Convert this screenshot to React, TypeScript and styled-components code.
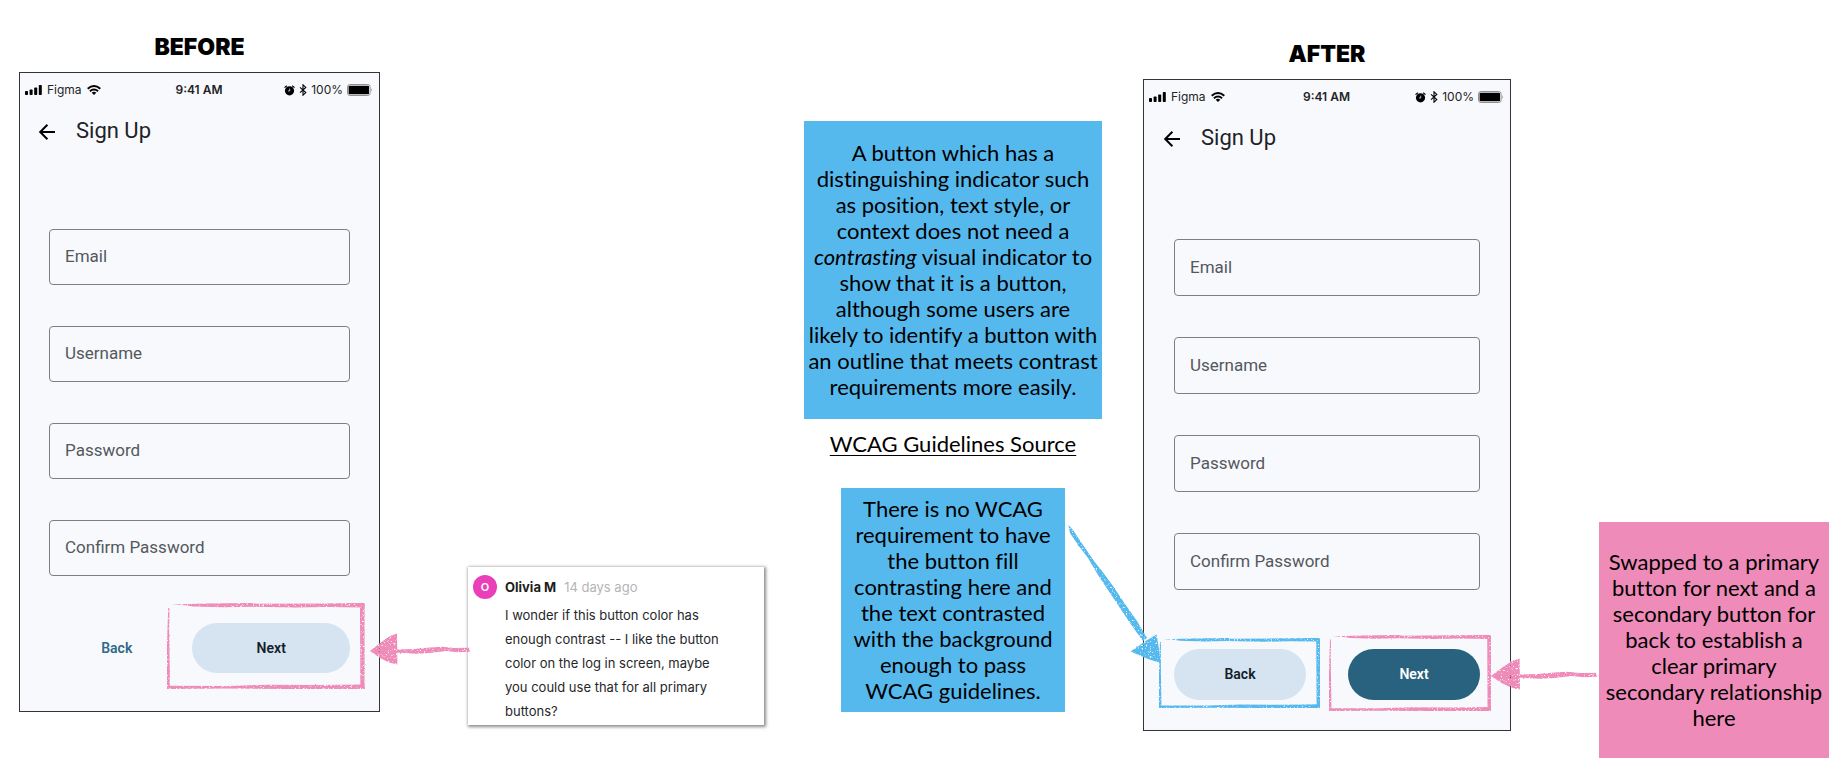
import React from "react";
import styled, { createGlobalStyle, css } from "styled-components";

const PINK = "#ee8bb8";
const BLUE = "#56b9ee";

const GlobalStyle = createGlobalStyle`
  *, *::before, *::after { box-sizing: border-box; }
  body { margin: 0; background: #ffffff; color: #000000; font-family: Lato, sans-serif; }
`;

const Board = styled.main`
  display: grid;
  grid-template-columns: 361fr 88fr 296fr 40fr 298fr 41fr 368fr 88fr 230fr;
  align-items: start;
  padding: 0 15px 14px 19px;
`;

const Column = styled.section<{ $top: number; $start: number }>`
  grid-column: ${(p) => p.$start};
  grid-row: 1;
  display: flex;
  flex-direction: column;
  align-items: center;
  padding-top: ${(p) => p.$top}px;
`;

const Gutter = styled.div<{ $start: number }>`
  grid-column: ${(p) => p.$start};
  grid-row: 1;
  align-self: stretch;
  position: relative;
  z-index: 2;
  pointer-events: none;
`;

const Heading = styled.h2`
  margin: 0 0 10px;
  font-family: Inter, sans-serif;
  font-size: 23px;
  line-height: 30px;
  font-weight: 900;
`;

/* ---------- phone ---------- */

const PhoneFrame = styled.article`
  align-self: stretch;
  border: 1px solid #333436;
  background: #f8f9fc;
`;

const StatusBar = styled.div<{ $height: number }>`
  display: grid;
  grid-template-columns: 1fr auto 1fr;
  align-items: center;
  height: ${(p) => p.$height}px;
  padding: 0 6px 0 5px;
  font-family: Inter, sans-serif;
  font-size: 12px;
  line-height: 16px;
  color: #222326;
`;

const StatusGroup = styled.div<{ $end?: boolean }>`
  display: flex;
  align-items: center;
  justify-content: ${(p) => (p.$end ? "flex-end" : "flex-start")};
  gap: ${(p) => (p.$end ? 4 : 5)}px;
`;

const Clock = styled.time`
  font-weight: 600;
`;

const AppBar = styled.header<{ $side: number }>`
  display: flex;
  align-items: center;
  gap: 18px;
  height: 50px;
  padding: 0 ${(p) => p.$side}px;
`;

const IconButton = styled.button`
  display: flex;
  padding: 0;
  border: 0;
  background: none;
  color: #000000;
`;

const ScreenTitle = styled.h3`
  margin: 0;
  padding-bottom: 2px;
  font-family: Roboto, sans-serif;
  font-size: 22px;
  line-height: 28px;
  font-weight: 400;
  color: #202226;
`;

const Form = styled.form<{ $top: number; $side: number; $bottom: number }>`
  padding: ${(p) => `${p.$top}px ${p.$side}px ${p.$bottom}px`};
`;

const Fields = styled.div<{ $gap: number }>`
  display: grid;
  gap: ${(p) => p.$gap}px;
`;

const TextField = styled.input<{ $height: number }>`
  width: 100%;
  height: ${(p) => p.$height}px;
  padding: 0 15px 2px;
  border: 1px solid #7c8085;
  border-radius: 4px;
  background: transparent;
  font-family: Roboto, sans-serif;
  font-size: 17px;
  color: #202226;
  &::placeholder { color: #54585d; opacity: 1; }
`;

const Actions = styled.div<{ $columns: string; $gap: number; $top: number }>`
  display: grid;
  grid-template-columns: ${(p) => p.$columns};
  gap: ${(p) => p.$gap}px;
  margin-top: ${(p) => p.$top}px;
`;

const ActionSlot = styled.div`
  position: relative;
  display: grid;
`;

type Variant = "text" | "tonal" | "filled";

const variants = {
  text: css`background: transparent; color: #2f6a8a;`,
  tonal: css`background: #d5e4f0; color: #14202a;`,
  filled: css`background: #29627f; color: #ffffff;`,
};

const ActionButton = styled.button<{ $variant: Variant; $height: number }>`
  height: ${(p) => p.$height}px;
  padding: 0 0 1px;
  border: 0;
  border-radius: 26px;
  font-family: Roboto, sans-serif;
  font-size: 14px;
  font-weight: 600;
  ${(p) => variants[p.$variant]}
`;

/* ---------- notes ---------- */

const Note = styled.p<{ $color: string; $width: number; $pad: number }>`
  width: 100%;
  max-width: ${(p) => p.$width}px;
  margin: 0;
  padding: ${(p) => p.$pad}px 0;
  background: ${(p) => p.$color};
  font-size: 22px;
  line-height: 26px;
  font-variant-ligatures: none;
  text-align: center;
  white-space: nowrap;
`;

const SourceLink = styled.a`
  margin: 12px 0 31px;
  font-size: 22px;
  line-height: 26px;
  color: #000000;
  text-decoration-thickness: 1px;
  text-underline-offset: 3px;
`;

const Comment = styled.article`
  align-self: stretch;
  display: grid;
  grid-template-columns: 24px 1fr;
  column-gap: 8px;
  padding: 8px 5px 2px;
  background: #ffffff;
  box-shadow: 1px 1px 3px 1px rgba(0, 0, 0, 0.45);
  font-family: Inter, sans-serif;
  font-size: 13px;
  line-height: 24px;
  color: #26272a;
`;

const Avatar = styled.span`
  display: grid;
  place-items: center;
  width: 24px;
  height: 24px;
  border-radius: 50%;
  background: #ea3fb8;
  color: #ffffff;
  font-size: 11px;
  font-weight: 600;
`;

const Byline = styled.header`
  display: flex;
  gap: 8px;
  color: #b4b5b8;
`;

const Author = styled.strong`
  font-weight: 700;
  color: #1c1d20;
`;

const CommentText = styled.p`
  grid-column: 2;
  margin: 4px 0 0;
  white-space: nowrap;
`;

/* ---------- chalk drawings ---------- */

const Drawing = styled.svg<{ $top: number; $left: number; $right: number; $height: number }>`
  position: absolute;
  top: ${(p) => p.$top}px;
  left: ${(p) => p.$left}px;
  width: calc(100% - ${(p) => p.$left + p.$right}px);
  height: ${(p) => p.$height}px;
  overflow: visible;
  pointer-events: none;
`;

const HiddenDefs = styled.svg`
  position: absolute;
  width: 0;
  height: 0;
`;

const ChalkFilter = () => (
  <HiddenDefs aria-hidden="true">
    <filter id="chalk" x="-5%" y="-10%" width="110%" height="120%">
      <feTurbulence type="fractalNoise" baseFrequency="0.5 0.6" numOctaves="2" seed="7" result="noise" />
      <feDisplacementMap in="SourceGraphic" in2="noise" scale="1.8" xChannelSelector="R" yChannelSelector="G" result="rough" />
      <feColorMatrix in="noise" type="matrix" values="0 0 0 0 0  0 0 0 0 0  0 0 0 0 0  0 0 6 0 -1.4" result="grain" />
      <feComposite in="rough" in2="grain" operator="in" />
    </filter>
  </HiddenDefs>
);

type Box = { top: number; left: number; right: number; height: number; color: string };

const ChalkFrame = ({ top, left, right, height, color }: Box) => (
  <Drawing $top={top} $left={left} $right={right} $height={height} viewBox="0 0 198 86" preserveAspectRatio="none" aria-hidden="true">
    <g fill={color} filter="url(#chalk)">
      <path d="M4 1.4 L40 0.6 L84 0 L90 0.8 L150 0.4 L198 0 L198 4.4 L160 4 L128 4.6 L84 3.8 L56 4.2 L26 3.4 L18 2.2 Z" />
      <path d="M193.4 1 L198 1 L198 86 L193.8 86 Z" />
      <path d="M0 82.8 L60 83 L100 81.8 L150 82 L198 81.4 L198 86 L120 86 L60 85.6 L0 86 Z" />
      <path d="M1.2 5 L2.4 5 L2.2 30 L3 84 L0 84 L0 40 Z" />
    </g>
  </Drawing>
);

const ChalkArrowLeft = ({ top, left, right, height, color }: Box) => (
  <Drawing $top={top} $left={left} $right={right} $height={height} viewBox="0 0 100 32" preserveAspectRatio="none" aria-hidden="true">
    <g fill={color} filter="url(#chalk)">
      <path d="M0 18 L12 8.6 L20 3 L27 0.5 L27.4 31.5 L19 29.4 L10 25 Z" />
      <path d="M25 16.6 L44 16 L60 14.4 L72 13.8 L84 15 L99 14.8 L100 18.8 L88 19.2 L76 18 L60 20 L46 20.8 L25 19.6 Z" />
    </g>
  </Drawing>
);

const ChalkArrowDown = ({ top, left, right, height, color }: Box) => (
  <Drawing $top={top} $left={left} $right={right} $height={height} viewBox="0 0 100 150" preserveAspectRatio="none" aria-hidden="true">
    <g fill={color} filter="url(#chalk)">
      <path d="M4.4 5 L9 10 L17 22 L30 41 L38 51 L49 66 L61 84 L73 101 L83 118 L79 121 L68 106 L56 88 L44 70 L34 55 L24 38 L14 25 L6 13 Z" />
      <path d="M66.6 131.6 L80 122 L92.6 114.4 L94.8 128 L96.6 143 L84 139 Z" />
    </g>
  </Drawing>
);

/* ---------- icons ---------- */

const SignalIcon = () => (
  <svg width="17" height="10" viewBox="0 0 17 10" fill="#000" aria-hidden="true">
    <rect x="0" y="6" width="3" height="4" rx="0.8" />
    <rect x="4.6" y="4.4" width="3" height="5.6" rx="0.8" />
    <rect x="9.2" y="2.4" width="3" height="7.6" rx="0.8" />
    <rect x="13.8" y="0" width="3" height="10" rx="0.8" />
  </svg>
);

const WifiIcon = () => (
  <svg width="14" height="10" viewBox="0 0 14 10" fill="none" stroke="#000" strokeWidth="2" aria-hidden="true">
    <path d="M0.7 3.7 Q7 -1.6 13.3 3.7" />
    <path d="M2.9 6.2 Q7 2.8 11.1 6.2" />
    <path d="M4.7 7.7 Q7 5.9 9.3 7.7 L7 10 Z" fill="#000" stroke="none" />
  </svg>
);

const AlarmIcon = () => (
  <svg width="11" height="11" viewBox="0 0 11 11" aria-hidden="true">
    <circle cx="5.5" cy="5.8" r="4.6" fill="#000" />
    <path d="M0.5 2.6 L2.8 0.7 M10.5 2.6 L8.2 0.7" stroke="#000" strokeWidth="1.2" />
    <path d="M5.7 3.6 V6 H4" stroke="#fff" strokeWidth="0.7" fill="none" />
  </svg>
);

const BluetoothIcon = () => (
  <svg width="8" height="12" viewBox="0 0 8 12" fill="none" stroke="#000" strokeWidth="1.1" aria-hidden="true">
    <path d="M1 3.4 L6.8 8.6 L4 11.2 V0.8 L6.8 3.4 L1 8.6" />
  </svg>
);

const BatteryIcon = () => (
  <svg width="26" height="12" viewBox="0 0 26 12" aria-hidden="true">
    <rect x="0.5" y="0.5" width="22.6" height="11" rx="2.4" fill="none" stroke="#8f9195" />
    <rect x="1.6" y="1.8" width="20.4" height="8.4" rx="0.8" fill="#000" />
    <path d="M24.4 4 Q26 6 24.4 8 Z" fill="#8f9195" />
  </svg>
);

const BackArrowIcon = () => (
  <svg width="22" height="20" viewBox="0 0 22 20" fill="none" stroke="currentColor" strokeWidth="2" aria-hidden="true">
    <path d="M19 10 H4.5 M11.4 2.8 L4.2 10 L11.4 17.2" />
  </svg>
);

/* ---------- screens ---------- */

const FIELDS = [
  { name: "Email", type: "email" },
  { name: "Username", type: "text" },
  { name: "Password", type: "password" },
  { name: "Confirm Password", type: "password" },
];

interface PhoneProps {
  status: number;
  barSide: number;
  formTop: number;
  formSide: number;
  formBottom: number;
  fieldHeight: number;
  fieldGap: number;
  children: React.ReactNode;
}

const Phone = ({ status, barSide, formTop, formSide, formBottom, fieldHeight, fieldGap, children }: PhoneProps) => (
  <PhoneFrame>
    <StatusBar $height={status}>
      <StatusGroup>
        <SignalIcon />
        <span>Figma</span>
        <WifiIcon />
      </StatusGroup>
      <Clock>9:41 AM</Clock>
      <StatusGroup $end>
        <AlarmIcon />
        <BluetoothIcon />
        <span>100%</span>
        <BatteryIcon />
      </StatusGroup>
    </StatusBar>
    <AppBar $side={barSide}>
      <IconButton type="button" aria-label="Go back">
        <BackArrowIcon />
      </IconButton>
      <ScreenTitle>Sign Up</ScreenTitle>
    </AppBar>
    <Form $top={formTop} $side={formSide} $bottom={formBottom}>
      <Fields $gap={fieldGap}>
        {FIELDS.map((f) => (
          <TextField key={f.name} $height={fieldHeight} type={f.type} placeholder={f.name} aria-label={f.name} />
        ))}
      </Fields>
      {children}
    </Form>
  </PhoneFrame>
);

export default function App() {
  return (
    <>
      <GlobalStyle />
      <ChalkFilter />
      <Board>
        <Column $start={1} $top={32}>
          <Heading>BEFORE</Heading>
          <Phone status={34} barSide={16} formTop={72} formSide={29} formBottom={38} fieldHeight={56} fieldGap={41}>
            <Actions $columns="135fr 157fr" $gap={8} $top={47}>
              <ActionSlot>
                <ActionButton type="button" $variant="text" $height={50}>Back</ActionButton>
              </ActionSlot>
              <ActionSlot>
                <ActionButton type="button" $variant="tonal" $height={50}>Next</ActionButton>
                <ChalkFrame top={-20} left={-25} right={-15} height={86} color={PINK} />
              </ActionSlot>
            </Actions>
          </Phone>
        </Column>

        <Gutter $start={2}>
          <ChalkArrowLeft top={633} left={-10} right={-2} height={32} color={PINK} />
        </Gutter>

        <Column $start={3} $top={567}>
          <Comment>
            <Avatar>O</Avatar>
            <Byline>
              <Author>Olivia M</Author>
              <span>14 days ago</span>
            </Byline>
            <CommentText>
              I wonder if this button color has<br />
              enough contrast -- I like the button<br />
              color on the log in screen, maybe<br />
              you could use that for all primary<br />
              buttons?
            </CommentText>
          </Comment>
        </Column>

        <Column $start={5} $top={121}>
          <Note $color={BLUE} $width={298} $pad={19}>
            A button which has a<br />
            distinguishing indicator such<br />
            as position, text style, or<br />
            context does not need a<br />
            <em>contrasting</em> visual indicator to<br />
            show that it is a button,<br />
            although some users are<br />
            likely to identify a button with<br />
            an outline that meets contrast<br />
            requirements more easily.
          </Note>
          <SourceLink href="#wcag">WCAG Guidelines Source</SourceLink>
          <Note $color={BLUE} $width={224} $pad={8}>
            There is no WCAG<br />
            requirement to have<br />
            the button fill<br />
            contrasting here and<br />
            the text contrasted<br />
            with the background<br />
            enough to pass<br />
            WCAG guidelines.
          </Note>
        </Column>

        <Gutter $start={6}>
          <ChalkArrowDown top={520} left={-38} right={-21} height={150} color={BLUE} />
        </Gutter>

        <Column $start={7} $top={39}>
          <Heading>AFTER</Heading>
          <Phone status={34} barSide={17} formTop={75} formSide={30} formBottom={30} fieldHeight={57} fieldGap={41}>
            <Actions $columns="1fr 1fr" $gap={42} $top={59}>
              <ActionSlot>
                <ActionButton type="button" $variant="tonal" $height={51}>Back</ActionButton>
                <ChalkFrame top={-11} left={-15} right={-14} height={70} color={BLUE} />
              </ActionSlot>
              <ActionSlot>
                <ActionButton type="button" $variant="filled" $height={51}>Next</ActionButton>
                <ChalkFrame top={-14} left={-19} right={-11} height={76} color={PINK} />
              </ActionSlot>
            </Actions>
          </Phone>
        </Column>

        <Gutter $start={8}>
          <ChalkArrowLeft top={658} left={-20} right={2} height={32} color={PINK} />
        </Gutter>

        <Column $start={9} $top={522}>
          <Note $color={PINK} $width={230} $pad={27}>
            Swapped to a primary<br />
            button for next and a<br />
            secondary button for<br />
            back to establish a<br />
            clear primary<br />
            secondary relationship<br />
            here
          </Note>
        </Column>
      </Board>
    </>
  );
}
